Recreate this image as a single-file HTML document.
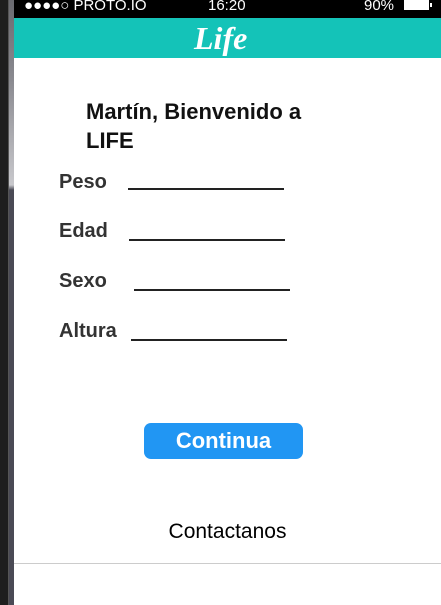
<!DOCTYPE html>
<html><head><meta charset="utf-8"><style>
*{margin:0;padding:0;box-sizing:border-box}
body{width:441px;height:605px;overflow:hidden;background:#fff;font-family:"Liberation Sans",sans-serif;position:relative}
.frame{position:absolute;left:0;top:0;width:14px;height:605px;background:#1e1e1e}
.frame .s{position:absolute;left:9px;top:0;width:5px;height:605px;background:linear-gradient(#6a6a70 0,#8a8a90 80px,#c8c8cc 185px,#4a4a55 190px,#4a4a55 605px)}
.frame .l{position:absolute;left:8px;top:0;width:1px;height:605px;background:#555}
.status{position:absolute;left:14px;top:0;right:0;height:18px;background:#000;color:#fff;font-size:15px;line-height:15px}
.hdr{position:absolute;left:14px;top:18px;right:0;height:40px;background:#14c3b8}
.logo{position:absolute;left:180px;top:0;color:#fff;font-family:"Liberation Serif",serif;font-style:italic;font-weight:bold;font-size:32px;line-height:40px}
b{position:absolute;font-size:20px;color:#333}
.ln{position:absolute;height:2px;background:#222}
</style></head><body>
<div class="frame"><div class="l"></div><div class="s"></div></div>
<div class="status"><span style="position:absolute;left:10px;top:-2px">●●●●○ PROTO.IO</span><span style="position:absolute;left:194px;top:-2px">16:20</span><span style="position:absolute;left:350px;top:-2px">90%</span><span style="position:absolute;left:390px;top:0;width:25px;height:10px;background:#fff"></span><span style="position:absolute;left:416px;top:3px;width:2px;height:4px;background:#fff"></span></div>
<div class="hdr"><div class="logo">Life</div></div>
<div style="position:absolute;left:86px;top:97px;font-size:22px;font-weight:bold;color:#111;line-height:29px">Martín, Bienvenido a<br>LIFE</div>
<b style="left:59px;top:171px">Peso</b><div class="ln" style="left:128px;top:188px;width:156px"></div>
<b style="left:59px;top:220px">Edad</b><div class="ln" style="left:129px;top:239px;width:156px"></div>
<b style="left:59px;top:270px">Sexo</b><div class="ln" style="left:134px;top:289px;width:156px"></div>
<b style="left:59px;top:320px">Altura</b><div class="ln" style="left:131px;top:339px;width:156px"></div>
<div style="position:absolute;left:144px;top:423px;width:159px;height:36px;background:#2196f3;border-radius:7px;color:#fff;font-weight:bold;font-size:22px;text-align:center;line-height:36px">Continua</div>
<div style="position:absolute;left:0;width:441px;padding-left:14px;top:520px;text-align:center;font-size:21px;color:#000">Contactanos</div>
<div style="position:absolute;left:14px;right:0;top:563px;height:1px;background:#ccc"></div>
</body></html>
